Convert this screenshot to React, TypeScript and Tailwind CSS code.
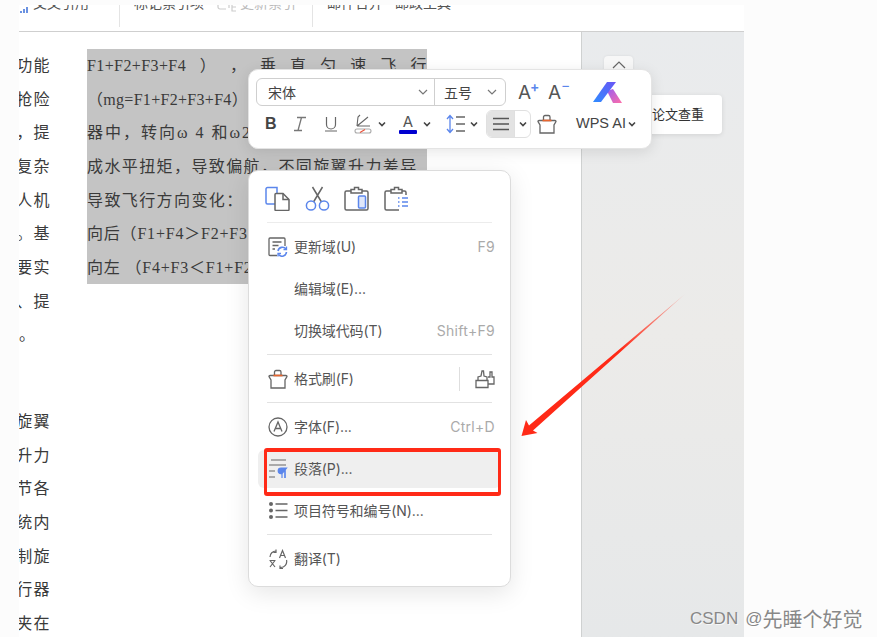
import React from "react";

const sans = "font-['Inter','Noto_Sans_CJK_SC',sans-serif]";

function Chev({ className = "", w = 12 }: { className?: string; w?: number }) {
  return (
    <svg width={w} height={w} viewBox="0 0 12 12" fill="none" stroke="currentColor" strokeWidth="1.2" className={className}>
      <path d="M2 4l4 4 4-4" />
    </svg>
  );
}
function Mini() {
  return (
    <svg width="8" height="6" viewBox="0 0 8 6" fill="none" stroke="#444" strokeWidth="1.6" className="shrink-0">
      <path d="M1 1.5l3 3 3-3" />
    </svg>
  );
}
const G = "#666";
const B = "#5b86ec";

function Copy() {
  return (
    <svg width="25" height="25" viewBox="0 0 25 25" fill="none" strokeWidth="1.5">
      <path d="M12 18H2.5a1.5 1.5 0 0 1-1.5-1.5V3a1.5 1.5 0 0 1 1.5-1.5H12V7" stroke={B} />
      <path d="M10 8.5a1 1 0 0 1 1-1h7l6 6v10a1 1 0 0 1-1 1H11a1 1 0 0 1-1-1z" stroke={G} fill="#fff" />
      <path d="M18 7.5v6h6" stroke={G} />
    </svg>
  );
}
function Scissors() {
  return (
    <svg width="25" height="25" viewBox="0 0 25 25" fill="none" strokeWidth="1.5">
      <path d="M7.5 1l9 15M17.5 1l-9 15" stroke={G} />
      <circle cx="6" cy="19.5" r="4.6" stroke={B} />
      <circle cx="19" cy="19.5" r="4.6" stroke={B} />
    </svg>
  );
}
function Clip1() {
  return (
    <svg width="25" height="25" viewBox="0 0 25 25" fill="none" strokeWidth="1.5">
      <path d="M7 5H2.5A1.5 1.5 0 0 0 1 6.500V22.500A1.500 1.500 0 0 0 2.500 24H22.500A1.500 1.500 0 0 0 24 22.500V6.500A1.500 1.500 0 0 0 22.500 5H18" stroke={G} />
      <path d="M7 7V3.500h3.500V1.500h4v2H18V7z" stroke={G} fill="#fff" />
      <rect x="14.500" y="10" width="7" height="12" rx="1" fill="#dfe7fb" stroke={B} />
    </svg>
  );
}
function Clip2() {
  return (
    <svg width="25" height="25" viewBox="0 0 25 25" fill="none" strokeWidth="1.5">
      <path d="M7 5H2.500A1.500 1.500 0 0 0 1 6.500V22.500A1.500 1.500 0 0 0 2.500 24H15M18 5h2.500A1.500 1.500 0 0 1 22 6.500V9" stroke={G} />
      <path d="M7 7V3.500h3.500V1.500h4v2H18V7z" stroke={G} fill="#fff" />
      <path d="M14 12h1.500M18 12h6M14 16h1.500M18 16h6M14 20h1.500M18 20h6" stroke={B} />
    </svg>
  );
}
function UpdateIcon() {
  return (
    <svg width="20" height="20" viewBox="0 0 20 20" fill="none" strokeWidth="1.3">
      <path d="M9 18.500H2a1 1 0 0 1-1-1V2a1 1 0 0 1 1-1h14a1 1 0 0 1 1 1v7" stroke={G} />
      <path d="M4.500 5h9M4.500 8.500h6M4.500 12h2.500" stroke={G} />
      <path d="M10 14a4.500 4.500 0 0 1 8-2M18.500 15a4.500 4.500 0 0 1-8 2.500" stroke={B} strokeWidth="1.600" />
      <path d="M18.500 9.500v3h-3M10 19.500v-3h3" stroke={B} strokeWidth="1.300" />
    </svg>
  );
}
function Brush({ s = 20 }: { s?: number }) {
  return (
    <svg width={s} height={s} viewBox="0 0 20 20" fill="none" strokeWidth="1.300">
      <path d="M6.500 6.500V3a1.500 1.500 0 0 1 1.500-1.500h3.500A1.500 1.500 0 0 1 13 3v3.500" stroke={G} />
      <path d="M1 7.500a1 1 0 0 1 1-1h16a1 1 0 0 1 1 1l-2 3.500v8H3v-8z" stroke={G} />
      <path d="M5.500 6.500h9" stroke="#e8662f" strokeWidth="1.700" />
    </svg>
  );
}
function BrushRight() {
  return (
    <svg width="20" height="20" viewBox="0 0 20 20" fill="none" stroke={G} strokeWidth="1.300">
      <path d="M1 11.500h12v7H1z" />
      <path d="M3 11.500V8l3-1 1-5h1.500l.5 5 3 1v3.500" />
      <path d="M13 8h2V3l2 0v5h2v7h-6" />
    </svg>
  );
}
function FontIcon() {
  return (
    <svg width="20" height="20" viewBox="0 0 20 20" fill="none" stroke={G} strokeWidth="1.300">
      <circle cx="10" cy="10" r="9" />
      <path d="M6 14.500L10 5l4 9.500M7.300 11.500h5.400" />
    </svg>
  );
}
function ParaIcon() {
  return (
    <svg width="20" height="20" viewBox="0 0 20 20" fill="none" strokeWidth="1.200">
      <path d="M3 1h15M1 6h17M1 12h6M1 18h6" stroke={G} />
      <path d="M14 19V9M17 19V9M18.500 9H13a2.800 2.800 0 0 0 0 5.600h1z" stroke={B} fill={B} />
      <path d="M17 19V9" stroke={B} />
    </svg>
  );
}
function ListIcon() {
  return (
    <svg width="20" height="20" viewBox="0 0 20 20" fill="none">
      <circle cx="3" cy="3" r="2" fill={G} />
      <circle cx="3" cy="9.500" r="2" fill={G} />
      <circle cx="3" cy="16" r="2" fill={G} />
      <path d="M7.500 3h12M7.500 9.500h12M7.500 16h12" stroke={G} strokeWidth="1.300" />
    </svg>
  );
}
function TranslateIcon() {
  return (
    <svg width="20" height="20" viewBox="0 0 20 20" fill="none" stroke={G} strokeWidth="1.200">
      <path d="M11.500 9L14.500 1.500 17.500 9M12.500 6.500h4" />
      <path d="M2 11.500L7 18M7 11.500L2 18M1.500 11.500h6" />
      <path d="M2 8a6 6 0 0 1 6-6M8 .5V3.500H5.500" />
      <path d="M18.500 11a6 6 0 0 1-6 7.500M12 16.500v3h3" />
    </svg>
  );
}

function Row({ icon, label, shortcut, extra, active }: { icon?: React.ReactNode; label: string; shortcut?: string; extra?: React.ReactNode; active?: boolean }) {
  return (
    <div className={`flex items-center rounded-[6px] pl-[10px] pr-[6px] ${active ? "my-[2px] h-[38px] bg-[#efefef]" : "h-[42px]"}`}>
      <div className="flex w-[20px] shrink-0 items-center justify-center">{icon}</div>
      <span className="ml-[6px] text-[14px] leading-none tracking-[-0.1px] text-[#555]">{label}</span>
      {shortcut && <span className="ml-auto text-[14px] leading-none tracking-[0.3px] text-[#aaa]">{shortcut}</span>}
      {extra}
    </div>
  );
}
function Sep() {
  return <div className="mx-[9px] mb-[3px] mt-[2px] h-px bg-[#e2e2e2]" />;
}

function ContextMenu() {
  return (
    <div className={`absolute left-[248px] top-[170px] h-[417px] w-[263px] rounded-[10px] border border-[#dcdcdc] bg-white px-[9px] shadow-[0_6px_24px_rgba(0,0,0,0.10)] ${sans}`}>
      <div className="flex h-[51px] items-end gap-[14.500px] pb-[11px] pl-[7px]">
        <Copy />
        <Scissors />
        <Clip1 />
        <Clip2 />
      </div>
      <div className="mx-[9px] mb-[2.600px] h-px bg-[#ececec]" />
      <Row icon={<UpdateIcon />} label="更新域(U)" shortcut="F9" />
      <Row label="编辑域(E)..." />
      <Row label="切换域代码(T)" shortcut="Shift+F9" />
      <Sep />
      <Row
        icon={<Brush />}
        label="格式刷(F)"
        extra={
          <div className="ml-auto flex items-center gap-[15px]">
            <div className="h-[24px] w-px bg-[#dedede]" />
            <BrushRight />
          </div>
        }
      />
      <Sep />
      <Row icon={<FontIcon />} label="字体(F)..." shortcut="Ctrl+D" />
      <Row icon={<ParaIcon />} label="段落(P)..." active />
      <Row icon={<ListIcon />} label="项目符号和编号(N)..." />
      <Sep />
      <Row icon={<TranslateIcon />} label="翻译(T)" />
    </div>
  );
}

function FloatBar() {
  return (
    <div className={`absolute left-[248px] top-[69px] flex h-[80px] w-[404px] flex-col rounded-[10px] border border-[#e4e4e4] bg-white pl-[7px] pt-[8px] shadow-[0_3px_14px_rgba(0,0,0,0.10)] ${sans}`}>
      <div className="flex h-[28px] items-center">
        <div className="flex h-[28px] w-[250px] rounded-[6px] border border-[#cfcfcf] text-[14px] text-[#444]">
          <div className="flex w-[178px] items-center justify-between border-r border-[#cfcfcf] pl-[11px] pr-[5px]">
            <span>宋体</span>
            <Chev className="text-[#777]" />
          </div>
          <div className="flex flex-1 items-center justify-between pl-[9px] pr-[7px]">
            <span>五号</span>
            <Chev className="text-[#777]" />
          </div>
        </div>
        <div className="ml-[12px] flex w-[20px] items-start text-[19px] leading-none text-[#555]">
          A<span className="-ml-[1px] -mt-[3px] text-[14px] font-semibold text-[#5b86ec]">+</span>
        </div>
        <div className="ml-[10px] flex w-[20px] items-start text-[19px] leading-none text-[#555]">
          A<span className="-mt-[5px] text-[14px] text-[#5b86ec]">−</span>
        </div>
        <svg width="30" height="22" viewBox="0 0 30 22" className="ml-[25px] shrink-0">
          <defs>
            <linearGradient id="lb" x1="0" y1="1" x2="1" y2="0">
              <stop offset="0" stopColor="#2f8cff" />
              <stop offset="1" stopColor="#6a55f5" />
            </linearGradient>
            <linearGradient id="lp" x1="0" y1="0" x2="1" y2="1">
              <stop offset="0" stopColor="#9a5cf0" />
              <stop offset="1" stopColor="#ff6ea8" />
            </linearGradient>
          </defs>
          <path d="M14 10l6-2 9 14h-9z" fill="url(#lp)" />
          <path d="M0 21L14 1h9L8 21z" fill="url(#lb)" />
        </svg>
      </div>
      <div className="mt-[3px] flex h-[29px] items-center">
        <span className="ml-[9px] w-[14px] font-['Liberation_Sans',sans-serif] text-[16px] font-bold leading-none text-[#444]">B</span>
        <svg width="14" height="16" viewBox="0 0 14 16" fill="none" stroke="#777" strokeWidth="1.300" className="ml-[14px]">
          <path d="M4 1.500h9M1 14.500h8M8.500 1.500L5 14.500" />
        </svg>
        <svg width="14" height="16" viewBox="0 0 14 16" fill="none" stroke="#666" strokeWidth="1.200" className="ml-[17px]">
          <path d="M2.500 1v7.500a4.500 4.500 0 0 0 9 0V1M1 15h12" />
        </svg>
        <svg width="18" height="20" viewBox="0 0 18 20" fill="none" strokeWidth="1.100" className="ml-[16px]">
          <path d="M3 12L4 3l2-2M3 12l5-4 6-5M3 12h13" stroke="#666" />
          <rect x="1" y="15" width="16" height="4" rx="2" stroke="#aaa" />
          <path d="M6 18.500l5-3" stroke="#e8503a" />
        </svg>
        <span className="ml-[6px]"><Mini /></span>
        <div className="ml-[13px] flex w-[18px] flex-col items-center">
          <span className="text-[15px] leading-[15px] text-[#555]">A</span>
          <div className="mt-[1px] h-[4px] w-[18px] rounded-[1px] bg-[#0000d0]" />
        </div>
        <span className="ml-[6px]"><Mini /></span>
        <svg width="20" height="20" viewBox="0 0 20 20" fill="none" strokeWidth="1.300" className="ml-[15px]">
          <path d="M4 1.500v17M1 5l3-3.500L7 5M1 15l3 3.500L7 15" stroke={B} />
          <path d="M10 3h9M10 10h9M10 17h9" stroke={G} />
        </svg>
        <span className="ml-[4px]"><Mini /></span>
        <div className="ml-[8px] flex h-[28px] w-[45px] overflow-hidden rounded-[6px] border border-[#e0e0e0]">
          <div className="flex w-[27px] items-center justify-center bg-[#e3e3e3]">
            <svg width="16" height="14" viewBox="0 0 16 14" fill="none" stroke="#555" strokeWidth="1.300">
              <path d="M0 1.500h16M0 7h16M0 12.500h16" />
            </svg>
          </div>
          <div className="flex flex-1 items-center justify-center border-l border-[#e0e0e0]"><Mini /></div>
        </div>
        <span className="ml-[6px]"><Brush /></span>
        <span className="ml-[19px] font-['Liberation_Sans',sans-serif] text-[14.500px] leading-none text-[#444]">WPS AI</span>
        <span className="ml-[2px]"><Mini /></span>
      </div>
    </div>
  );
}

function TopBar() {
  return (
    <div className={`flex h-[27px] shrink-0 overflow-hidden border-b border-[#cfcfcf] bg-white ${sans}`}>
      <div className="flex h-[22px] w-[100px] items-start text-[14px] leading-[14px] text-[#555]">
        <svg width="10" height="6" viewBox="0 0 10 6" className="ml-[1px] mt-[2px]">
          <path d="M1 4v2M4 2v4M7 0v6" stroke="#3b6fd8" strokeWidth="1.500" />
        </svg>
        <span className="-mt-[9px] ml-[3px]">交叉引用</span>
      </div>
      <div className="h-[22px] w-px bg-[#e4e4e4]" />
      <div className="-mt-[9px] ml-[14px] text-[14px] leading-[14px] text-[#555]">标记索引项</div>
      <svg width="20" height="8" viewBox="0 0 20 8" fill="none" stroke="#ccc" strokeWidth="1.200" className="ml-[13px] shrink-0">
        <path d="M1 0v2a2 2 0 0 0 2 2h6M12 0v3M15 0v6h4M15 2h4" />
      </svg>
      <div className="-mt-[9px] ml-[3px] text-[14px] leading-[14px] text-[#bbb]">更新索引</div>
      <div className="ml-[16px] h-[22px] w-px bg-[#e4e4e4]" />
      <div className="-mt-[9px] ml-[14px] text-[14px] leading-[14px] text-[#555]">邮件合并</div>
      <div className="-mt-[9px] ml-[12px] text-[14px] leading-[14px] text-[#555]">邮政工具</div>
    </div>
  );
}

const leftA = ["功能", "抢险", "，提", "复杂", "人机", "。基", "要实", "、提"];
const leftB = ["旋翼", "升力", "节各", "统内", "制旋", "行器", "夹在"];

function LeftLine({ t }: { t: string }) {
  return <div className="flex h-[33.700px] items-center justify-end whitespace-nowrap tracking-[1.400px]">{t}</div>;
}

function Doc() {
  return (
    <div className="flex w-[562px] shrink-0 bg-white pt-[17px] font-['Liberation_Serif','Noto_Sans_CJK_SC',serif] text-[16px] text-[#3a3a3a]">
      <div className="w-[32px] shrink-0 overflow-hidden">
        {leftA.map((t) => <LeftLine key={t} t={t} />)}
        <div className="flex h-[33.700px] items-center">。</div>
        <div className="mt-[53px]">
          {leftB.map((t) => <LeftLine key={t} t={t} />)}
        </div>
      </div>
      <div className="ml-[36px] h-[235px] w-[340px] shrink-0 overflow-hidden bg-[#c4c4c4] pt-[0.500px] tracking-[1.400px]">
        <div className="flex h-[33.600px] items-center justify-between whitespace-nowrap tracking-[0.400px]">
          <span>F1+F2+F3+F4</span>
          <span>）</span>
          <span>，</span>
          <span>垂</span>
          <span>直</span>
          <span>匀</span>
          <span>速</span>
          <span>飞</span>
          <span>行</span>
        </div>
        <div className="flex h-[33.600px] items-center whitespace-nowrap tracking-[0.300px]">（mg=F1+F2+F3+F4）</div>
        <div className="flex h-[33.600px] items-center whitespace-nowrap tracking-[2px]">器中，转向ω 4 和ω2</div>
        <div className="flex h-[33.600px] items-center whitespace-nowrap">成水平扭矩，导致偏航，不同旋翼升力差异</div>
        <div className="flex h-[33.600px] items-center whitespace-nowrap">导致飞行方向变化：</div>
        <div className="flex h-[33.600px] items-center whitespace-nowrap tracking-[0.800px]">向后（F1+F4＞F2+F3）</div>
        <div className="flex h-[33.600px] items-center whitespace-nowrap tracking-[0.800px]">向左 （F4+F3＜F1+F2）</div>
      </div>
    </div>
  );
}

function SidePanel() {
  return (
    <div className={`relative flex-1 border-l border-[#cfd1d1] bg-gradient-to-b from-[#e9ebed] via-[#ecebe9] to-[#e6e8e9] ${sans}`}>
      <div className="absolute left-[22px] top-[24px] flex h-[30px] w-[29px] items-start justify-center rounded-[4px] bg-[#f7f7f7] pt-[5px] shadow-[0_0_3px_rgba(0,0,0,0.08)]">
        <svg width="14" height="8" viewBox="0 0 14 8" fill="none" stroke="#666" strokeWidth="1.200">
          <path d="M1 7l6-6 6 6" />
        </svg>
      </div>
      <div className="absolute left-[40px] top-[63px] flex h-[39px] w-[100px] items-center justify-end rounded-[4px] bg-white pr-[18px] text-[13px] text-[#333] shadow-[0_1px_5px_rgba(0,0,0,0.10)]">
        论文查重
      </div>
    </div>
  );
}

export default function App() {
  return (
    <div className="relative h-[637px] w-[877px] overflow-hidden bg-[#fcfcfc] pl-[19px] pt-[5px]">
      <div className="flex h-[632px] w-[725px] flex-col">
        <TopBar />
        <div className="flex min-h-0 flex-1">
          <Doc />
          <SidePanel />
        </div>
      </div>

      <FloatBar />
      <ContextMenu />

      <div className="absolute left-[264px] top-[448px] h-[48px] w-[237px] rounded-[3px] border-y-4 border-x-[3px] border-[#ff2a17]" />

      <svg width="170" height="150" viewBox="0 0 170 150" className="absolute left-[518px] top-[292px]">
        <defs>
          <linearGradient id="arrow" x1="0" y1="1" x2="1" y2="0">
            <stop offset="0.6" stopColor="#ff2a17" />
            <stop offset="1" stopColor="#ff2a17" stopOpacity="0.2" />
          </linearGradient>
        </defs>
        <polygon points="3.500,144 8,128 11,133.500 167,2 15,138.500 19.500,141" fill="url(#arrow)" />
      </svg>

      <div className="absolute left-[690px] top-[604px] flex items-center text-[#888] [text-shadow:1px_1px_0_rgba(255,255,255,0.7)]">
        <span className="font-['Liberation_Sans',sans-serif] text-[17px]">CSDN</span>
        <span className="ml-[7px] font-['Liberation_Sans',sans-serif] text-[17px]">@</span>
        <span className="font-['Noto_Sans_CJK_SC',sans-serif] text-[20px]">先睡个好觉</span>
      </div>
    </div>
  );
}
